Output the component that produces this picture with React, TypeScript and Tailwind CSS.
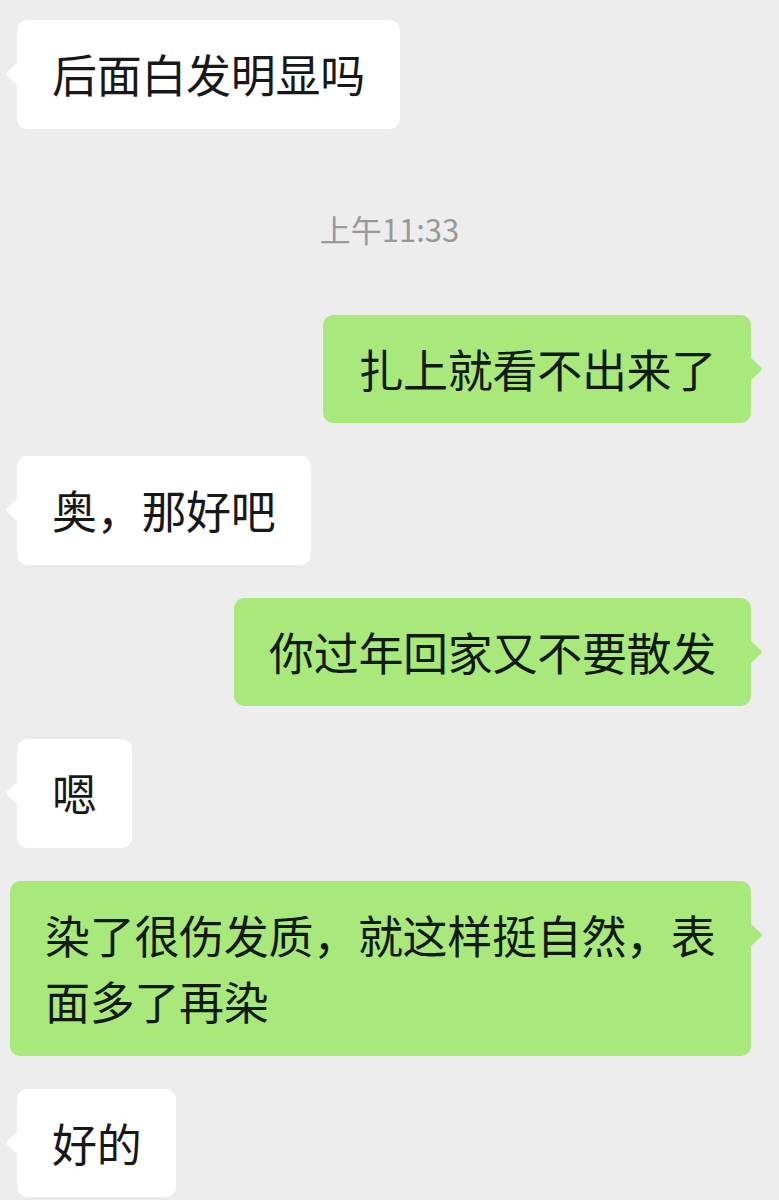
import React from "react";

type Msg = { side: "left" | "right"; text: string };

const before: Msg[] = [{ side: "left", text: "后面白发明显吗" }];

const after: Msg[] = [
  { side: "right", text: "扎上就看不出来了" },
  { side: "left", text: "奥，那好吧" },
  { side: "right", text: "你过年回家又不要散发" },
  { side: "left", text: "嗯" },
  { side: "right", text: "染了很伤发质，就这样挺自然，表面多了再染" },
  { side: "left", text: "好的" },
];

const Tail = ({ side }: { side: "left" | "right" }) => {
  const fill = side === "left" ? "#ffffff" : "#a9e97b";
  return (
    <svg
      width="13"
      height="24"
      viewBox="0 0 13 24"
      className={
        side === "left"
          ? "absolute left-[-12px] top-[42px]"
          : "absolute right-[-12px] top-[42px] scale-x-[-1]"
      }
    >
      <path d="M13 0 L2 10.2 Q0.4 12 2 13.8 L13 24 Z" fill={fill} />
    </svg>
  );
};

const Bubble = ({ side, text }: Msg) => {
  const isLeft = side === "left";
  return (
    <div className={isLeft ? "flex justify-start pl-[17px]" : "flex justify-end pr-[28px]"}>
      <div
        className={
          isLeft
            ? "relative max-w-[741px] rounded-[10px] bg-white px-[35px] py-[21px] text-[45px] leading-[66.5px] tracking-[-0.3px] text-[#181818]"
            : "relative max-w-[741px] rounded-[10px] bg-[#a9e97b] px-[35px] py-[21px] text-[45px] leading-[66.5px] tracking-[-0.3px] text-[#111a0d]"
        }
      >
        <Tail side={side} />
        {text}
      </div>
    </div>
  );
};

export default function App() {
  return (
    <div
      className="min-h-[1200px] w-[779px] overflow-hidden bg-[#ededed] pt-[20px]"
      style={{ fontFamily: '"Noto Sans CJK SC", "Noto Sans", sans-serif' }}
    >
      <div className="flex flex-col gap-[33px]">
        {before.map((m, i) => (
          <Bubble key={i} {...m} />
        ))}
      </div>
      <div className="mt-[80px] mb-[66px] text-center text-[31px] leading-[40px] text-[#999999]">
        上午11:33
      </div>
      <div className="flex flex-col gap-[33px]">
        {after.map((m, i) => (
          <Bubble key={i} {...m} />
        ))}
      </div>
    </div>
  );
}
